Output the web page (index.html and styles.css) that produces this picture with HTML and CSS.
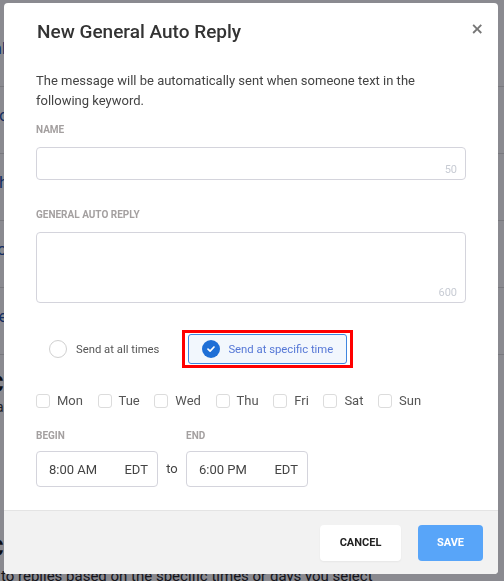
FILE: index.html
```html
<!DOCTYPE html>
<html lang="en">
<head>
    <meta charset="utf-8">
    <title>Auto Replies</title>
    <link rel="stylesheet" href="styles.css">
</head>
<body>
<div class="page">
    <div class="page-row">Inbox</div>
    <div class="page-row">Contacts</div>
    <div class="page-row">Channels</div>
    <div class="page-row">Topics</div>
    <div class="page-row">Replies</div>
    <div class="page-row page-heading">Custom</div>
    <div class="page-row page-note">automatic</div>
    <div class="page-row page-heading">Conditional</div>
    <div class="page-row page-foot">to replies based on the specific times or days you select</div>
</div>

<div class="backdrop">
    <div class="modal">
        <div class="modal-head">
            <h1>New General Auto Reply</h1>
            <button class="close" type="button">&times;</button>
        </div>
        <div class="modal-body">
            <p class="intro">The message will be automatically sent when someone text in the following keyword.</p>

            <label class="caption">Name</label>
            <div class="field">
                <input type="text">
                <span class="count">50</span>
            </div>

            <label class="caption">General Auto Reply</label>
            <div class="field field-area">
                <textarea></textarea>
                <span class="count">600</span>
            </div>

            <div class="send-mode">
                <div class="mode-wrap">
                    <div class="mode">
                        <span class="radio"></span>
                        Send at all times
                    </div>
                </div>
                <div class="mode-wrap mode-marked">
                    <div class="mode mode-active">
                        <span class="radio radio-on">
                            <svg width="10" height="10" viewBox="0 0 10 10"><path d="M2 5.2 4.1 7.2 8 3" fill="none" stroke="#fff" stroke-width="1.7" stroke-linecap="round" stroke-linejoin="round"/></svg>
                        </span>
                        Send at specific time
                    </div>
                </div>
            </div>

            <div class="days">
                <label class="day"><span class="box"></span>Mon</label>
                <label class="day"><span class="box"></span>Tue</label>
                <label class="day"><span class="box"></span>Wed</label>
                <label class="day"><span class="box"></span>Thu</label>
                <label class="day"><span class="box"></span>Fri</label>
                <label class="day"><span class="box"></span>Sat</label>
                <label class="day"><span class="box"></span>Sun</label>
            </div>

            <div class="times">
                <div class="time-col">
                    <label class="caption">Begin</label>
                    <div class="time"><span>8:00 AM</span><span>EDT</span></div>
                </div>
                <span class="to">to</span>
                <div class="time-col">
                    <label class="caption">End</label>
                    <div class="time"><span>6:00 PM</span><span>EDT</span></div>
                </div>
            </div>
        </div>
        <div class="modal-foot">
            <button class="btn btn-cancel" type="button">Cancel</button>
            <button class="btn btn-save" type="button">Save</button>
        </div>
    </div>
</div>
</body>
</html>
```

FILE: styles.css
```css
*{
    margin:0;
    padding:0;
    box-sizing:border-box;
}
html,body{
    width:100%;
    height:100%;
}
body{
    font-family:Roboto, 'Noto Sans', sans-serif;
    background:#fff;
    color:#333;
    overflow:hidden;
}

/* page under the dialog */
.page{
    padding:20px 0 0 0;
    margin-left:-12px;
}
.page-row{
    height:67px;
    line-height:56px;
    border-bottom:1px solid #ddd;
    color:#1d4fa8;
    font-size:17px;
}
.page-heading{
    height:auto;
    line-height:26px;
    border:none;
    color:#111;
    font-size:24px;
    font-weight:600;
    margin-top:16px;
}
.page-note{
    height:auto;
    line-height:20px;
    border:none;
    color:#333;
    font-size:14px;
    margin-left:8px;
}
.page-heading + .page-note + .page-heading{
    margin-top:118px;
}
.page-foot{
    height:auto;
    line-height:20px;
    border:none;
    color:#222;
    font-size:15px;
    margin-left:13px;
    margin-top:5px;
}

/* dialog */
.backdrop{
    position:fixed;
    inset:0;
    background:rgba(10, 10, 24, 0.48);
    padding:3px 6px 0 4px;
}
.modal{
    width:494px;
    height:571px;
    background:#fff;
    border-radius:4px;
    overflow:hidden;
    display:flex;
    flex-direction:column;
}
.modal-head{
    display:flex;
    align-items:flex-start;
    justify-content:space-between;
    padding:17px 14px 0 33px;
}
.modal-head h1{
    font-size:19px;
    font-weight:500;
    line-height:24px;
    color:#333;
}
.close{
    border:none;
    background:none;
    font-family:'DejaVu Sans', sans-serif;
    font-size:16px;
    font-weight:bold;
    color:#777;
    line-height:20px;
    margin-top:-1px;
    cursor:pointer;
}
.modal-body{
    flex:1;
    padding:27px 32px 0 32px;
}
.intro{
    font-size:13px;
    line-height:19.5px;
    color:#444;
}
.caption{
    display:block;
    font-size:10px;
    font-weight:700;
    text-transform:uppercase;
    color:#a4a0a0;
    line-height:12px;
    margin-top:14px;
}
.field{
    position:relative;
    margin-top:11px;
}
.field input,
.field textarea{
    display:block;
    width:100%;
    height:33px;
    border:1px solid #d4d4dc;
    border-radius:4px;
    outline:none;
    resize:none;
    font-family:inherit;
}
.field-area textarea{
    height:71px;
}
.field .count{
    position:absolute;
    right:9px;
    bottom:4px;
    font-size:11px;
    color:#c8ccd4;
}
.field + .caption{
    margin-top:29px;
}

.send-mode{
    display:flex;
    align-items:center;
    gap:17px;
    margin-top:27px;
    padding-left:7px;
}
.mode-wrap{
    padding:1px 3px;
    border:3px solid transparent;
}
.mode-marked{
    border-color:#ff0000;
}
.mode{
    display:flex;
    align-items:center;
    gap:9px;
    font-size:11.3px;
    color:#555;
    height:30px;
}
.mode-active{
    border:1px solid #3f86df;
    border-radius:3px;
    background:#f2f7fd;
    color:#5577d6;
    padding:0 13px;
    gap:8px;
}
.radio{
    width:18px;
    height:18px;
    border:1px solid #d0d0d0;
    border-radius:50%;
    display:flex;
    align-items:center;
    justify-content:center;
}
.radio-on{
    border:none;
    background:#1f6fd6;
}

.days{
    display:flex;
    align-items:center;
    margin-top:25px;
}
.day{
    display:flex;
    align-items:center;
    font-size:13px;
    color:#555;
    margin-right:14.6px;
}
.box{
    width:14px;
    height:14px;
    border:1px solid #dcdcdc;
    border-radius:3px;
    margin-right:7px;
}

.times{
    display:flex;
    align-items:flex-end;
}
.time-col .caption{
    margin-top:22px;
}
.time{
    display:flex;
    justify-content:space-between;
    align-items:center;
    width:122px;
    height:36px;
    margin-top:9px;
    border:1px solid #d4d4dc;
    border-radius:4px;
    padding:0 9px 0 12px;
    font-size:13px;
    color:#444;
}
.to{
    font-size:13px;
    color:#444;
    width:28px;
    text-align:center;
    line-height:36px;
}

.modal-foot{
    height:64px;
    background:#f2f2f2;
    border-top:1px solid #e4e4e4;
    display:flex;
    justify-content:flex-end;
    align-items:center;
    gap:17px;
    padding:0 15px 0 0;
}
.btn{
    height:36px;
    border:none;
    border-radius:4px;
    font-family:inherit;
    font-size:11px;
    font-weight:700;
    text-transform:uppercase;
    cursor:pointer;
}
.btn-cancel{
    width:81px;
    background:#fff;
    color:#222;
    box-shadow:0 1px 2px rgba(0, 0, 0, 0.05);
}
.btn-save{
    width:65px;
    background:#58a5f9;
    color:#fff;
}
```
